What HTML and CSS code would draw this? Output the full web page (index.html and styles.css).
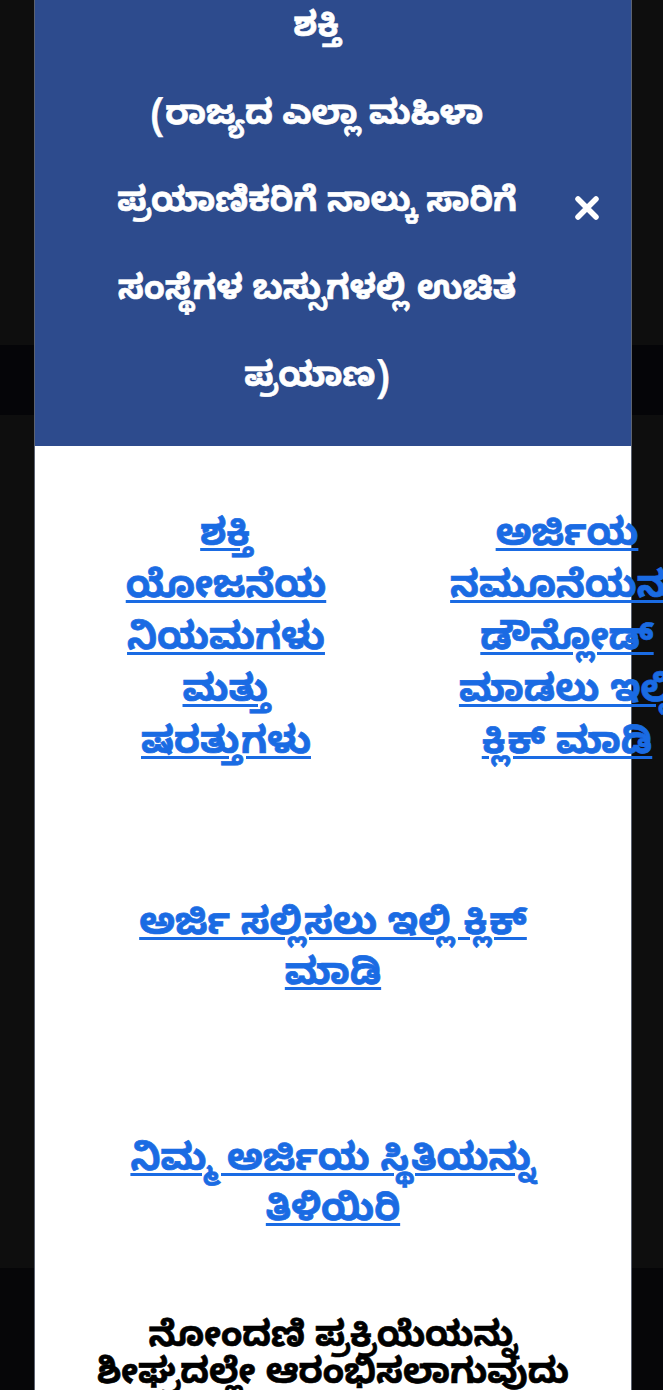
FILE: index.html
```html
<!DOCTYPE html>
<html lang="kn">
<head>
<meta charset="utf-8">
<title>ಶಕ್ತಿ</title>
<link rel="stylesheet" href="styles.css">
</head>
<body>
<div class="modal">
  <div class="modal-header">
    <div class="modal-title">ಶಕ್ತಿ<br>(ರಾಜ್ಯದ ಎಲ್ಲಾ ಮಹಿಳಾ<br>ಪ್ರಯಾಣಿಕರಿಗೆ ನಾಲ್ಕು ಸಾರಿಗೆ<br>ಸಂಸ್ಥೆಗಳ ಬಸ್ಸುಗಳಲ್ಲಿ ಉಚಿತ<br>ಪ್ರಯಾಣ)</div>
    <div class="close">
      <svg width="24" height="24" viewBox="0 0 24 24" aria-hidden="true">
        <path d="M3 3 L21 21 M21 3 L3 21" stroke="#ffffff" stroke-width="5.5" stroke-linecap="round" fill="none"/>
      </svg>
    </div>
  </div>
  <div class="modal-body">
    <div class="link-grid">
      <a class="link" href="#">ಶಕ್ತಿ<br>ಯೋಜನೆಯ<br>ನಿಯಮಗಳು<br>ಮತ್ತು<br>ಷರತ್ತುಗಳು</a>
      <a class="link" href="#">ಅರ್ಜಿಯ<br>ನಮೂನೆಯನ್ನು<br>ಡೌನ್ಲೋಡ್<br>ಮಾಡಲು ಇಲ್ಲಿ<br>ಕ್ಲಿಕ್ ಮಾಡಿ</a>
    </div>
    <a class="link wide apply" href="#">ಅರ್ಜಿ ಸಲ್ಲಿಸಲು ಇಲ್ಲಿ ಕ್ಲಿಕ್<br>ಮಾಡಿ</a>
    <a class="link wide status" href="#">ನಿಮ್ಮ ಅರ್ಜಿಯ ಸ್ಥಿತಿಯನ್ನು<br>ತಿಳಿಯಿರಿ</a>
    <p class="notice">ನೋಂದಣಿ ಪ್ರಕ್ರಿಯೆಯನ್ನು<br>ಶೀಘ್ರದಲ್ಲೇ ಆರಂಭಿಸಲಾಗುವುದು</p>
  </div>
</div>
</body>
</html>
```
FILE: styles.css
```css
html, body {
  margin: 0;
  padding: 0;
}
body {
  width: 663px;
  height: 1390px;
  overflow: hidden;
  background: linear-gradient(to bottom,
    #0e0e0e 0, #0e0e0e 345px,
    #050508 345px, #050508 415px,
    #0e0e0e 415px, #0e0e0e 1268px,
    #060608 1268px, #060608 1390px);
  font-family: "Noto Sans Kannada", "Lohit Kannada", "Noto Sans", "DejaVu Sans", sans-serif;
}
.modal {
  margin-left: 34px;
  width: 596px;
  border-left: 1px solid #5c6270;
  border-right: 1px solid #5c6270;
  margin-top: -12px;
}
.modal-header {
  background: #2d4b8d;
  color: #ffffff;
  display: flex;
  align-items: center;
  padding: 0 29px 20px 27px;
}
.modal-title {
  flex: 1;
  text-align: center;
  font-weight: 700;
  font-size: 34px;
  line-height: 87.5px;
  white-space: nowrap;
  -webkit-text-stroke: 0.6px #ffffff;
}
.close {
  width: 30px;
  display: flex;
  justify-content: center;
  margin-top: 2px;
}
.close svg {
  display: block;
}
.modal-body {
  background: #ffffff;
  padding: 68px 0 0 0;
  height: 876px;
  display: flex;
  flex-direction: column;
  align-items: center;
}
.link-grid {
  align-self: flex-start;
  display: grid;
  grid-template-columns: 232px 234px;
  column-gap: 108px;
  margin-left: 75px;
}
.link {
  color: #1a6be3;
  font-weight: 700;
  font-size: 37.5px;
  line-height: 52px;
  text-align: center;
  text-decoration: underline;
  text-decoration-thickness: 3px;
  text-underline-offset: 3px;
  white-space: nowrap;
  -webkit-text-stroke: 0.7px #1a6be3;
}
.wide {
  display: block;
  line-height: 50px;
}
.apply {
  margin-top: 130px;
}
.status {
  margin-top: 136px;
}
.notice {
  margin: 83px 0 0 0;
  color: #000000;
  font-weight: 700;
  font-size: 35px;
  line-height: 37px;
  text-align: center;
  white-space: nowrap;
  -webkit-text-stroke: 0.6px #000000;
}
```
